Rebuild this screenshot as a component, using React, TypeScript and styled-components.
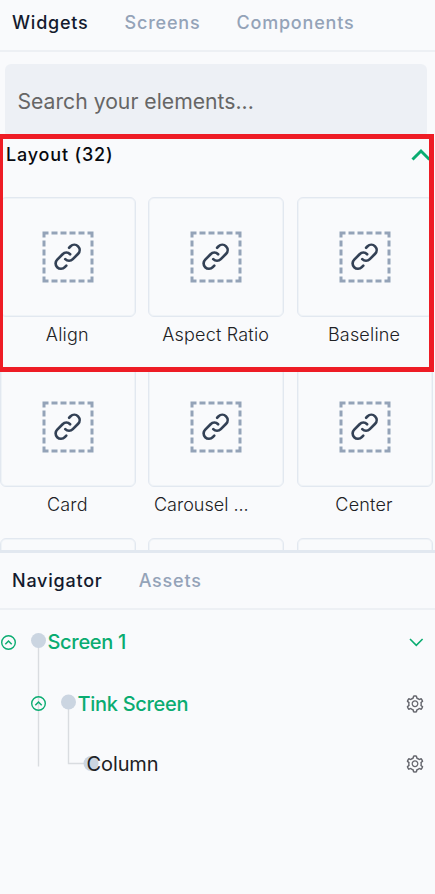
import React from "react";
import styled, { createGlobalStyle } from "styled-components";
import { AiOutlineSetting } from "react-icons/ai";

const GlobalStyle = createGlobalStyle`
  *, *::before, *::after { box-sizing: border-box; }
  body { margin: 0; background: #f9fafc; font-family: Inter, sans-serif; overflow: hidden; }
`;

const Panel = styled.main`
  position: relative;
  width: 435px;
  height: 894px;
  display: flex;
  flex-direction: column;
  overflow: hidden;
  background: #f9fafc;
`;

const WidgetPane = styled.section`
  height: 550px;
  flex: none;
  display: flex;
  flex-direction: column;
  overflow: hidden;
`;

const Tabs = styled.nav<{ $height: number; $top: number }>`
  height: ${(p) => p.$height}px;
  flex: none;
  display: flex;
  gap: 36px;
  padding: ${(p) => p.$top}px 12px 0;
  border-bottom: 2px solid #edf0f4;
`;

const Tab = styled.button<{ $active?: boolean }>`
  border: 0;
  padding: 0;
  height: 22px;
  background: none;
  font: ${(p) => (p.$active ? 450 : 500)} 18px/22px Inter, sans-serif;
  letter-spacing: ${(p) => (p.$active ? 0.78 : 0.8)}px;
  white-space: nowrap;
  color: ${(p) => (p.$active ? "#141b2e" : "#94a3b8")};
`;

const Search = styled.input`
  flex: none;
  width: 422px;
  height: 74px;
  margin: 12px 0 0 5.4px;
  padding: 0 12px;
  border: 0;
  border-radius: 6px;
  background: #edf0f5;
  font: 400 21.2px/28px Inter, sans-serif;
  color: #666;
  &::placeholder { color: #666; opacity: 1; }
`;

const GroupHeader = styled.header`
  flex: none;
  height: 34px;
  padding: 0 5.5px 0 6px;
  display: flex;
  align-items: center;
  justify-content: space-between;
  font: 450 18px/22px Inter, sans-serif;
  letter-spacing: 0.82px;
  color: #080a10;
`;

const Grid = styled.div`
  flex: none;
  padding-top: 25px;
  display: grid;
  grid-template-columns: repeat(3, 136px);
  grid-auto-rows: 170.4px;
  column-gap: 12.4px;
`;

const Tile = styled.div`
  display: flex;
  flex-direction: column;
`;

const Card = styled.div`
  height: 120px;
  display: flex;
  align-items: center;
  justify-content: center;
  border: 1px solid #e2e8f0;
  border-radius: 6px;
  box-shadow: inset 0 0 0 1px rgba(226, 232, 240, 0.4);
`;

const TileLabel = styled.span<{ $truncated?: boolean }>`
  margin-top: 7px;
  padding: 0 7px 0 5.6px;
  text-align: ${(p) => (p.$truncated ? "left" : "center")};
  font: 300 18px/22px Inter, sans-serif;
  letter-spacing: ${(p) => (p.$truncated ? 0 : 0.2)}px;
  white-space: nowrap;
  color: #202124;
`;

const Highlight = styled.div`
  position: absolute;
  top: 134px;
  left: 0;
  width: 434px;
  height: 238px;
  border: 5px solid #ee1c25;
  border-left-width: 3px;
  pointer-events: none;
`;

const NavigatorPane = styled.section`
  flex: 1;
  display: flex;
  flex-direction: column;
  border-top: 3px solid #e2e8f0;
`;

const Tree = styled.div`
  padding-top: 1px;
  display: flex;
  flex-direction: column;
`;

const TreeRow = styled.div<{ $height: number }>`
  height: ${(p) => p.$height}px;
  display: flex;
  align-items: center;
`;

const Branch = styled.svg`
  flex: none;
  align-self: flex-start;
  display: block;
  overflow: visible;
`;

const NodeLabel = styled.span<{ $selected?: boolean }>`
  flex: 1;
  font: ${(p) => (p.$selected ? 500 : 400)} 20px/24px Inter, sans-serif;
  letter-spacing: ${(p) => (p.$selected ? -0.3 : -0.1)}px;
  color: ${(p) => (p.$selected ? "#0aac71" : "#202124")};
  white-space: nowrap;
`;

const RowAction = styled.span`
  width: 20px;
  margin-right: 10.5px;
  height: 20px;
  display: flex;
  align-items: center;
  justify-content: center;
  color: #65666d;
`;

const PlaceholderIcon = () => (
  <svg width="52" height="52" viewBox="0 0 52 52" fill="none">
    <path d="M.5 2H51.5M.5 50H51.5M2 .5V51.5M50 .5V51.5" stroke="#94a3b8" strokeWidth="3" strokeDasharray="6 3" />
    <g transform="translate(9.7 9.7) scale(1.333)" stroke="#334155" strokeWidth="2" strokeLinecap="round" strokeLinejoin="round">
      <path d="M13.828 10.172a4 4 0 00-5.656 0l-4 4a4 4 0 105.656 5.656l1.102-1.101m-.758-4.899a4 4 0 005.656 0l4-4a4 4 0 00-5.656-5.656l-1.1 1.1" />
    </g>
  </svg>
);

const Toggle = ({ x, y }: { x: number; y: number }) => (
  <g transform={`translate(${x} ${y})`} stroke="#0aac71" fill="none">
    <circle r="6.8" strokeWidth="1.4" />
    <path d="M-3.2 1.7L0-1.5L3.2 1.7" strokeWidth="1.5" />
  </g>
);

const tiles = ["Align", "Aspect Ratio", "Baseline", "Card", "Carousel ...", "Center", "", "", ""];

export default function App() {
  return (
    <>
      <GlobalStyle />
      <Panel>
        <WidgetPane>
          <Tabs $height={52} $top={12}>
            <Tab $active>Widgets</Tab>
            <Tab>Screens</Tab>
            <Tab>Components</Tab>
          </Tabs>
          <Search placeholder="Search your elements..." />
          <GroupHeader>
            Layout (32)
            <svg width="20" height="16" viewBox="0 0 20 16" fill="none">
              <path d="M2.5 12.5L11 4L19.5 12.5" stroke="#0aac71" strokeWidth="3" />
            </svg>
          </GroupHeader>
          <Grid>
            {tiles.map((name, i) => (
              <Tile key={i}>
                <Card>{name && <PlaceholderIcon />}</Card>
                <TileLabel $truncated={name.endsWith("...")}>{name}</TileLabel>
              </Tile>
            ))}
          </Grid>
        </WidgetPane>
        <NavigatorPane>
          <Tabs $height={57} $top={17}>
            <Tab $active>Navigator</Tab>
            <Tab>Assets</Tab>
          </Tabs>
          <Tree>
            <TreeRow $height={62}>
              <Branch width="47.5" height="62">
                <path d="M38.5 29V155.5" stroke="#d9dce0" strokeWidth="1.4" />
                <circle cx="38.5" cy="29.5" r="7.5" fill="#cbd5e1" />
                <Toggle x={8.5} y={31.5} />
              </Branch>
              <NodeLabel $selected>Screen 1</NodeLabel>
              <RowAction>
                <svg width="18" height="18" viewBox="0 0 18 18" fill="none">
                  <path d="M4 6L10.3 12.3L16.6 6" stroke="#0aac71" strokeWidth="1.6" />
                </svg>
              </RowAction>
            </TreeRow>
            <TreeRow $height={61}>
              <Branch width="77.5" height="61">
                <path d="M68.5 29V90.5H84" stroke="#d9dce0" strokeWidth="1.4" fill="none" />
                <circle cx="68.5" cy="29" r="7.5" fill="#cbd5e1" />
                <Toggle x={38.5} y={30.5} />
              </Branch>
              <NodeLabel $selected>Tink Screen</NodeLabel>
              <RowAction><AiOutlineSetting size={20} /></RowAction>
            </TreeRow>
            <TreeRow $height={59}>
              <Branch width="86.5" height="59">
                <circle cx="91" cy="29.5" r="7.5" fill="#cbd5e1" />
              </Branch>
              <NodeLabel>Column</NodeLabel>
              <RowAction><AiOutlineSetting size={20} /></RowAction>
            </TreeRow>
          </Tree>
        </NavigatorPane>
        <Highlight />
      </Panel>
    </>
  );
}
